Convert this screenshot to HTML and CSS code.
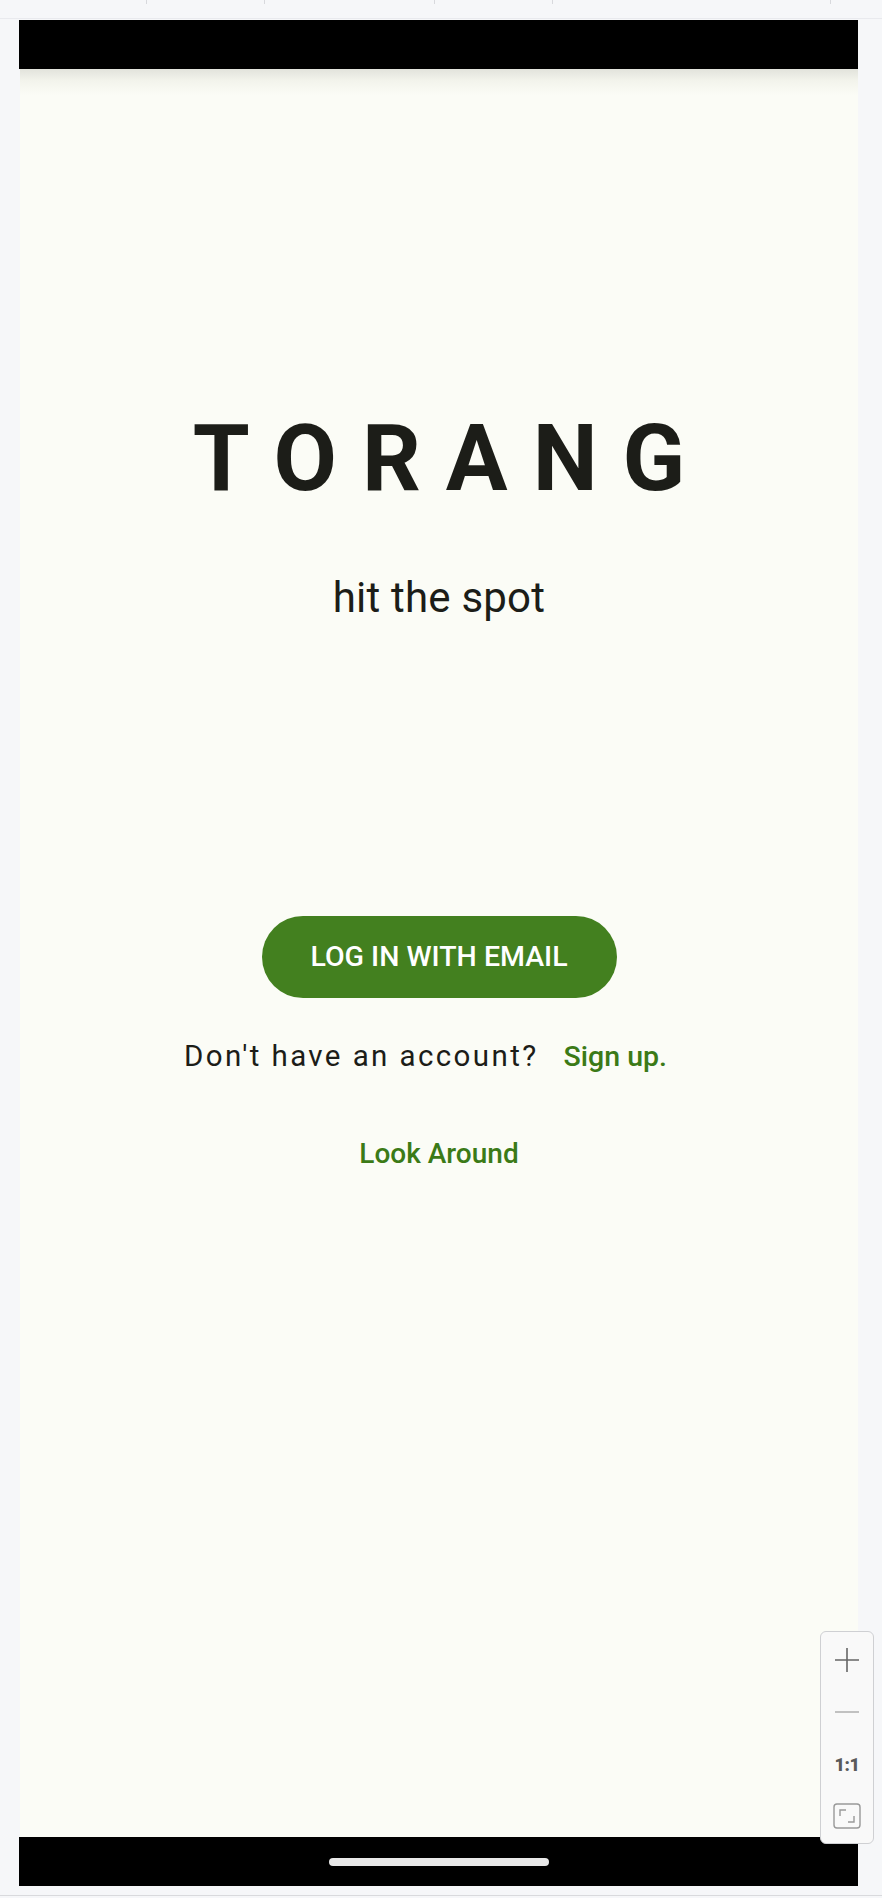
FILE: index.html
```html
<!DOCTYPE html>
<html lang="en">
<head>
<meta charset="utf-8">
<title>Torang</title>
<link rel="stylesheet" href="styles.css">
</head>
<body>
<div class="topbar">
  <span class="seg s1"></span><span class="seg s2"></span><span class="seg s3"></span><span class="seg s4"></span><span class="seg s5"></span><span class="seg s6"></span>
</div>
<div class="stage">
  <div class="phone">
    <div class="statusbar"></div>
    <main class="app">
      <h1 class="logo">TORANG</h1>
      <p class="tagline">hit the spot</p>
      <button class="login">LOG IN WITH EMAIL</button>
      <p class="signup"><span class="q">Don't have an account?</span><a class="link">Sign up.</a></p>
      <a class="link look">Look Around</a>
    </main>
    <div class="navbar"><span class="home"></span></div>
  </div>
</div>
<div class="bottomline"></div>
<div class="zoomctl">
  <span class="zi plus">
    <svg width="26" height="26" viewBox="0 0 26 26"><path d="M13 1v24M1 13h24" stroke="#666" stroke-width="1.6" fill="none"/></svg>
  </span>
  <span class="zi minus">
    <svg width="26" height="4" viewBox="0 0 26 4"><path d="M1 2h24" stroke="#aaa" stroke-width="1.4" fill="none"/></svg>
  </span>
  <span class="zi one">1:1</span>
  <span class="zi fit">
    <svg width="28" height="26" viewBox="0 0 28 26"><rect x="1" y="1" width="26" height="24" rx="3" stroke="#999" stroke-width="1.4" fill="none"/><path d="M7 13V7h6M21 13v6h-6" stroke="#999" stroke-width="1.4" fill="none"/></svg>
  </span>
</div>
</body>
</html>
```
FILE: styles.css
```css
html, body {
  margin: 0;
  padding: 0;
}
body {
  background: #f6f7f9;
  font-family: Roboto, "Liberation Sans", sans-serif;
  width: 882px;
  height: 1898px;
  overflow: hidden;
  position: relative;
}
.topbar {
  height: 18px;
  display: flex;
  border-bottom: 1px solid #e9eaee;
  box-sizing: content-box;
}
.seg {
  display: block;
  height: 4px;
  border-right: 1px solid #d8d9dd;
}
.s1 { width: 146px; }
.s2 { width: 117px; }
.s3 { width: 169px; }
.s4 { width: 117px; }
.s5 { width: 277px; }
.s6 { flex: 1; border-right: none; }
.stage {
  padding: 1px 24px 0 19px;
}
.phone {
  width: 839px;
  display: flex;
  flex-direction: column;
}
.statusbar {
  height: 49px;
  background: #000;
}
.app {
  height: 1768px;
  background: linear-gradient(#e2e3dc 0px, #f3f4ec 12px, #fbfcf6 26px, #fbfcf6 100%);
  display: flex;
  flex-direction: column;
  align-items: center;
  box-sizing: border-box;
  padding-top: 343.6px;
  margin-left: 1px;
}
.logo {
  margin: 0;
  font-family: Roboto, "Liberation Sans", sans-serif;
  font-weight: 700;
  font-size: 92px;
  line-height: 92px;
  letter-spacing: 25px;
  margin-right: -25px;
  color: #1c1d18;
}
.tagline {
  margin: 72.1px 0 0;
  font-size: 42px;
  line-height: 42px;
  letter-spacing: 0.2px;
  color: #1c1d18;
}
.login {
  margin-top: 297.3px;
  width: 355px;
  height: 82px;
  border: none;
  border-radius: 41px;
  background: #43801f;
  color: #fff;
  font-family: Roboto, "Liberation Sans", sans-serif;
  font-weight: 500;
  font-size: 28.5px;
  padding: 0;
}
.signup {
  margin: 38px 27px 0 0;
  font-size: 29.5px;
  line-height: 40px;
  display: flex;
  align-items: baseline;
  gap: 25px;
  color: #1c1d18;
  letter-spacing: 2.4px;
}
.link {
  color: #3b7a17;
  font-weight: 500;
  font-size: 28.5px;
  letter-spacing: 0;
}
.look {
  margin-top: 57px;
  font-size: 28px;
  line-height: 40px;
}
.navbar {
  height: 49px;
  background: #000;
  display: flex;
  justify-content: center;
  align-items: center;
}
.home {
  width: 220px;
  height: 8px;
  border-radius: 4px;
  background: #e8e8e8;
}
.bottomline {
  height: 2px;
  margin-top: 9px;
  border-top: 1px solid #d9dadd;
}
.zoomctl {
  position: absolute;
  left: 820px;
  top: 1631px;
  width: 54px;
  height: 213px;
  border: 1px solid #cfd0d3;
  border-radius: 6px;
  background: #f9f9f9;
  display: flex;
  flex-direction: column;
  align-items: center;
  box-sizing: border-box;
}
.zi {
  display: flex;
  align-items: center;
  justify-content: center;
  height: 52px;
}
.plus { margin-top: 2px; }
.one {
  font-family: Roboto, "Liberation Sans", sans-serif;
  font-weight: 900;
  font-size: 18px;
  letter-spacing: -0.5px;
  color: #5a5a5a;
}
```
